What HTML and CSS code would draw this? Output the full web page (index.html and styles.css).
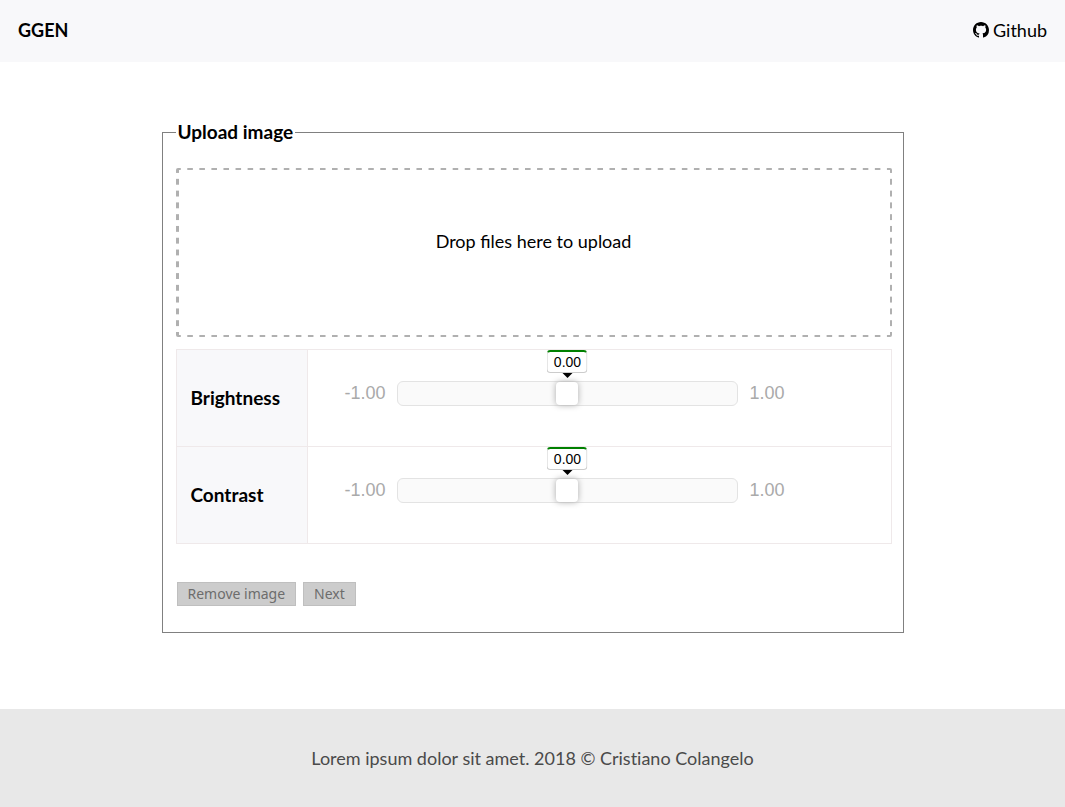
FILE: index.html
```html
<!DOCTYPE html>
<html lang="en">
<head>
<meta charset="utf-8">
<meta name="viewport" content="width=device-width, initial-scale=1">
<title>GGEN</title>
<link rel="stylesheet" href="styles.css">
</head>
<body>
<header class="topbar">
  <a class="brand" href="#">GGEN</a>
  <a class="github" href="#">
    <svg class="github-icon" viewBox="0 0 16 16" aria-hidden="true"><path fill="currentColor" d="M8 0C3.58 0 0 3.58 0 8c0 3.54 2.29 6.53 5.47 7.59.4.07.55-.17.55-.38 0-.19-.01-.82-.01-1.49-2.01.37-2.53-.49-2.69-.94-.09-.23-.48-.94-.82-1.13-.28-.15-.68-.52-.01-.53.63-.01 1.08.58 1.23.82.72 1.21 1.87.87 2.33.66.07-.52.28-.87.51-1.07-1.78-.2-3.64-.89-3.64-3.95 0-.87.31-1.59.82-2.15-.08-.2-.36-1.02.08-2.12 0 0 .67-.21 2.2.82.64-.18 1.32-.27 2-.27s1.36.09 2 .27c1.53-1.04 2.2-.82 2.2-.82.44 1.1.16 1.92.08 2.12.51.56.82 1.27.82 2.15 0 3.07-1.87 3.75-3.65 3.95.29.25.54.73.54 1.48 0 1.07-.01 1.93-.01 2.2 0 .21.15.46.55.38A8.01 8.01 0 0 0 16 8c0-4.42-3.58-8-8-8z"/></svg>
    <span>Github</span>
  </a>
</header>
<main class="content">
  <form>
    <fieldset class="panel">
      <legend class="panel-title">Upload image</legend>
      <button class="dropzone" type="button">Drop files here to upload</button>
      <table class="settings">
        <tr>
          <th scope="row"><label for="brightness">Brightness</label></th>
          <td>
            <div class="slider">
              <span>-1.00</span>
              <div class="slider-control">
                <input class="range" id="brightness" type="range" min="-1" max="1" step="0.01" value="0">
                <output class="bubble" for="brightness">0.00</output>
              </div>
              <span>1.00</span>
            </div>
          </td>
        </tr>
        <tr>
          <th scope="row"><label for="contrast">Contrast</label></th>
          <td>
            <div class="slider">
              <span>-1.00</span>
              <div class="slider-control">
                <input class="range" id="contrast" type="range" min="-1" max="1" step="0.01" value="0">
                <output class="bubble" for="contrast">0.00</output>
              </div>
              <span>1.00</span>
            </div>
          </td>
        </tr>
      </table>
      <div class="actions">
        <button class="action" type="button" disabled>Remove image</button>
        <button class="action" type="button" disabled>Next</button>
      </div>
    </fieldset>
  </form>
</main>
<footer class="footer">Lorem ipsum dolor sit amet. 2018 © Cristiano Colangelo</footer>
</body>
</html>
```
FILE: styles.css
```css
* {
  box-sizing: border-box;
}

body {
  display: flex;
  flex-direction: column;
  min-height: 100vh;
  margin: 0;
  background: #fff;
  color: #000;
  font: 18px/26px Lato, "Open Sans", sans-serif;
}

.topbar {
  display: flex;
  justify-content: space-between;
  align-items: center;
  padding: 17px 18px 19px;
  background: #f8f8fa;
}

.topbar a {
  color: inherit;
  text-decoration: none;
}

.brand {
  font-weight: 700;
}

.github {
  display: flex;
  align-items: center;
  gap: 4px;
}

.github-icon {
  width: 16px;
  height: 16px;
}

.content {
  flex: 1;
  width: 100%;
  max-width: 742px;
  margin: 0 auto;
  padding: 57px 0 76px;
}

.panel {
  min-width: 0;
  margin: 0;
  padding: 23px 11px 26px 13px;
  border: 1px solid #808080;
}

.panel-title {
  padding: 0 2px;
  font-size: 19px;
  font-weight: 700;
}

.dropzone {
  --dash: #b0b0b0 3px, transparent 3px 9px, #b0b0b0 9px;
  display: block;
  width: 100%;
  padding: 58px 20px 81px;
  border: 2px solid transparent;
  border-radius: 2px;
  background:
    linear-gradient(90deg, var(--dash)) 0 -2px / 12px 2px round no-repeat,
    linear-gradient(90deg, var(--dash)) 0 calc(100% + 2px) / 12px 2px round no-repeat,
    linear-gradient(var(--dash)) -2px 0 / 2px 12px no-repeat round,
    linear-gradient(var(--dash)) calc(100% + 2px) 0 / 2px 12px no-repeat round;
  background-origin: padding-box;
  background-clip: border-box;
  color: #000;
  font: inherit;
}

.settings {
  width: 100%;
  margin-top: 12px;
  border-collapse: collapse;
}

.settings th,
.settings td {
  height: 97px;
  border: 1px solid #efe9ea;
}

.settings th {
  width: 131px;
  padding: 0 14px;
  background: #f8f8fa;
  font-size: 19px;
  text-align: left;
}

.settings td {
  padding: 0 106px 10px 37px;
}

.slider {
  display: flex;
  align-items: center;
  gap: 11px;
  color: #aaa;
  font-family: "Liberation Sans", Arial, sans-serif;
}

.slider-control {
  position: relative;
  flex: 1;
  display: flex;
}

.range {
  appearance: none;
  width: 100%;
  height: 25px;
  margin: 0;
  border: 1px solid #e3e3e3;
  border-radius: 6px;
  background: #fafafa;
}

.range::-webkit-slider-thumb {
  appearance: none;
  width: 22px;
  height: 23px;
  border-radius: 4px;
  background: #fff;
  box-shadow: 0 0 6px #aaa;
}

.bubble {
  position: absolute;
  bottom: calc(100% + 8px);
  left: 50%;
  width: 41px;
  border: 1px solid #ccc;
  border-top: 2px solid #008000;
  border-radius: 4px;
  background: #fff;
  color: #000;
  font-size: 14px;
  line-height: 20px;
  text-align: center;
  transform: translateX(-50%);
}

.bubble::after {
  content: "";
  position: absolute;
  top: calc(100% + 1px);
  left: 50%;
  border: 5px solid transparent;
  border-top-color: #000;
  border-bottom: 0;
  transform: translateX(-50%);
}

.actions {
  display: flex;
  gap: 7px;
  margin-top: 38px;
  padding-left: 1px;
}

.action {
  padding: 0 10px;
  border: 1px solid #bfbfbf;
  background: #ccc;
  color: #6d6d6d;
  font: 14px/22px "Noto Sans", Tahoma, sans-serif;
}

.footer {
  padding: 36px 18px;
  background: #e8e8e8;
  color: #4a4a4a;
  font-variant-ligatures: none;
  text-align: center;
}
```
